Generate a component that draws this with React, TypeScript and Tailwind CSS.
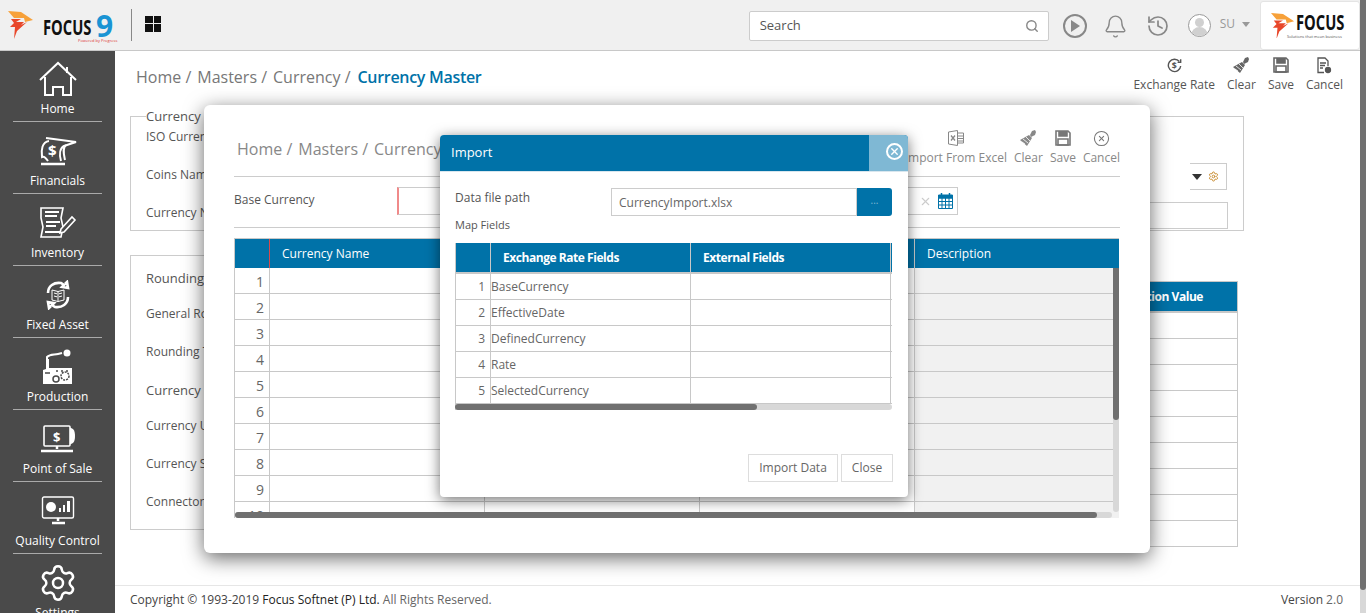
import React from 'react';
import { Search, Bell, History, X, Settings, CircleX } from 'lucide-react';

const font = { fontFamily: '"Open Sans", sans-serif' };

const navItems = ['Home', 'Financials', 'Inventory', 'Fixed Asset', 'Production', 'Point of Sale', 'Quality Control', 'Settings'];

const NavIcon = ({ name }: { name: string }) => {
  switch (name) {
    case 'Home':
      return (
        <svg width="38" height="36" viewBox="0 0 38 36" fill="none" stroke="white" strokeWidth="2">
          <path d="M1 19 19 2l18 17" />
          <path d="M28 6V12" />
          <path d="M6 16v18h8v-8h10v8h8V16" />
        </svg>
      );
    case 'Financials':
      return (
        <svg width="38" height="30" viewBox="0 0 38 30" fill="none" stroke="white" strokeWidth="2">
          <path d="M7 2l30 4-12 4c-4 2-5 8-3 15" />
          <path d="M10 5C3 6 2 14 3 21c2-1 4 1 6 4" />
          <path d="M27 9c-4 3-2 10-1 15" />
          <path d="M2 28h24" strokeWidth="2.5" />
          <text x="9" y="20" fill="white" stroke="none" fontSize="15" fontWeight="700" fontFamily="Open Sans">$</text>
        </svg>
      );
    case 'Inventory':
      return (
        <svg width="38" height="32" viewBox="0 0 38 32" fill="none" stroke="white" strokeWidth="1.6">
          <path d="M2 1h22l-2 10 2 9-2 10H2l2-10-2-9z" />
          <path d="M6 5h14M6 9h12M7 15h14M7 19h10M6 25h15" strokeWidth="2" />
          <path d="M22 22l11-12 3 3-11 12-4 1z" fill="#4a4a4a" />
        </svg>
      );
    case 'Fixed Asset':
      return (
        <svg width="26" height="30" viewBox="0 0 26 30" fill="none" stroke="white">
          <path d="M3 13C3 6 9 2 16 3l3 2-2 2 6 1-1-6-2 2" strokeWidth="2.6" />
          <path d="M23 17c0 7-6 11-13 10l-3-2 2-2-6-1 1 6 2-2" strokeWidth="2.6" />
          <path d="M7 10l6 1.500L19 10v10l-6 1.500L7 20zM13 11.500v10M9 13l3 .8M9 16l3 .8M14 13.800l3-.8M14 16.800l3-.8" strokeWidth="1" />
        </svg>
      );
    case 'Production':
      return (
        <svg width="32" height="36" viewBox="0 0 32 36" fill="none">
          <path d="M5 18V8c3-3 7-2 11-3l4-1" stroke="white" strokeWidth="2" />
          <circle cx="25" cy="4" r="3.500" fill="white" />
          <path d="M1 35V21l3-1V10h3v9h23v16z" fill="white" />
          <circle cx="14" cy="30" r="3" stroke="#4a4a4a" strokeWidth="1.500" />
          <circle cx="23" cy="27" r="4" stroke="#4a4a4a" strokeWidth="1.500" strokeDasharray="2 1" />
          <path d="M3 24h5M14 22h2M19 22h2M24 22h2" stroke="#4a4a4a" strokeWidth="1.500" />
        </svg>
      );
    case 'Point of Sale':
      return (
        <svg width="36" height="30" viewBox="0 0 36 30" fill="none" stroke="white">
          <rect x="4" y="2" width="26" height="20" strokeWidth="1.600" rx="1" />
          <path d="M30 4c3 0 5 2 5 8s-2 8-5 8z" fill="white" stroke="none" />
          <path d="M17 22v3M1 27h32" strokeWidth="2.500" />
          <text x="13" y="18" fill="white" stroke="none" fontSize="13" fontWeight="700" fontFamily="Open Sans">$</text>
        </svg>
      );
    case 'Quality Control':
      return (
        <svg width="34" height="30" viewBox="0 0 34 30" fill="none" stroke="white">
          <rect x="1.500" y="1" width="31" height="21" rx="1.500" strokeWidth="1.400" />
          <circle cx="10" cy="11" r="5" fill="white" stroke="none" />
          <path d="M18 16v-4h2v4zM22 16V9h2v7zM26 16V5h3v11z" fill="white" stroke="none" />
          <path d="M17 22v3M11 27h13" strokeWidth="2.500" />
        </svg>
      );
    default:
      return <Settings size={40} strokeWidth={1.5} className="text-white" />;
  }
};

const Flame = ({ w }: { w: number }) => (
  <svg width={w} viewBox="0 0 26 28" height={(w * 28) / 26}>
    <path d="M0 0l13 1 12 8-8 2-1-4H6z" fill="#f7a13a" />
    <path d="M3 8h10l-5 3 8 0-3 3 6-3-10 9-3 8 1-12-5 0 4-4z" fill="#e8472a" />
  </svg>
);

const BrushIcon = ({ color = '#666' }: { color?: string }) => (
  <svg width="18" height="18" viewBox="0 0 18 18">
    <path d="M11 6l2-4 3-1 1 2-1 3-4 2z" fill={color} />
    <path d="M10 6l3 3-5 8-7-6z" fill={color} />
    <path d="M4 10l5 4M7 8l4 4M3 13l3 2" stroke="white" strokeWidth="0.8" />
  </svg>
);

const SaveIcon = ({ color = '#666' }: { color?: string }) => (
  <svg width="18" height="18" viewBox="0 0 18 18" fill="none" stroke={color} strokeWidth="1.6">
    <path d="M2 2h12l2 2v12H2z" />
    <path d="M5 2v5h8V2" fill={color} />
    <path d="M4 10h10v6H4z" />
  </svg>
);

const DocCancelIcon = () => (
  <svg width="16" height="17" viewBox="0 0 16 17" fill="none" stroke="#555" strokeWidth="1.3">
    <path d="M8 15.500H2V1h7l3 3v5" />
    <path d="M4 6h6M4 8.500h5M4 11h3" />
    <circle cx="12" cy="13" r="2.500" fill="#555" />
  </svg>
);

const ExcelIcon = () => (
  <svg width="18" height="18" viewBox="0 0 18 18" fill="none" stroke="#888" strokeWidth="1">
    <path d="M1.500 3l9-1.500v15l-9-1.500z" />
    <path d="M10.500 4h6v10h-6M10.500 7h6M10.500 9.500h6M10.500 12h6" />
    <path d="M4 6.500l4 5M8 6.500l-4 5" strokeWidth="1.300" />
  </svg>
);

const CalendarIcon = () => (
  <svg width="15" height="16" viewBox="0 0 15 16" fill="none" stroke="#0072a8">
    <path d="M3.500 0v3M11.500 0v3" strokeWidth="1.500" />
    <path d="M.5 2h14v3H.5z" fill="#0072a8" />
    <path d="M.5 5h14v10.500H.5zM.5 8.500h14M.5 12h14M4 5v10.500M7.500 5v10.500M11 5v10.500" strokeWidth="1" />
  </svg>
);

const ExchangeIcon = () => (
  <svg width="15" height="15" viewBox="0 0 17 17" fill="none" stroke="#555" strokeWidth="1.600">
    <path d="M14 4a7 7 0 1 0 1.500 5" />
    <path d="M15.500 1.500V5h-3.500" />
    <text x="5.500" y="12.500" fill="#555" stroke="none" fontSize="10" fontWeight="700" fontFamily="Open Sans">$</text>
  </svg>
);

const ToolButton = ({ icon, label, className = 'text-[#555]' }: { icon: React.ReactNode; label: string; className?: string }) => (
  <div className={`flex flex-col items-center gap-[3px] text-[12px] leading-[16px] ${className}`}>
    <div className="h-[18px] flex items-center text-[#555]">{icon}</div>
    <span className="whitespace-nowrap">{label}</span>
  </div>
);

const GridRows = ({ rows }: { rows: number }) => (
  <div className="flex flex-col">
    {Array.from({ length: rows }).map((_, i) => (
      <div key={i} className="h-[26px] border-b border-[#c8c8c8]" />
    ))}
  </div>
);

const MainTableRow = ({ n }: { n: number }) => (
  <div className="flex h-[26px] shrink-0 border-b border-[#c8c8c8] text-[14px] text-[#666]">
    <div className="w-[35px] shrink-0 border-r border-[#c8c8c8] text-right pr-[5px] leading-[27px]">{n}</div>
    <div className="w-[215px] shrink-0 border-r border-[#c8c8c8]" />
    <div className="w-[215px] shrink-0 border-r border-[#c8c8c8]" />
    <div className="w-[215px] shrink-0 border-r border-[#c8c8c8]" />
    <div className="flex-1 bg-[#f1f1f1]" />
  </div>
);

const importFields = ['BaseCurrency', 'EffectiveDate', 'DefinedCurrency', 'Rate', 'SelectedCurrency'];

export default function App() {
  return (
    <div className="relative h-[613px] w-[1366px] overflow-hidden bg-white flex flex-col text-[#555]" style={font}>
      {/* Top bar */}
      <header className="h-[51px] shrink-0 bg-[#f0f0f0] border-b border-[#c8c8c8] flex items-center">
        <div className="ml-[8px]"><Flame w={26} /></div>
        <div className="ml-[9px] relative flex items-center w-[72px] h-[40px]">
          <span className="absolute left-0 top-[10px] origin-left scale-x-[0.7] text-[21px] font-bold text-[#111] leading-[24px]">FOCUS</span>
          <span className="absolute left-[53px] top-[9px] text-[30px] font-bold text-[#1a94d4] leading-[24px]">9</span>
          <span className="absolute left-[35px] top-[33px] text-[4px] leading-[5px] text-[#d33] whitespace-nowrap">Powered by Progress</span>
        </div>
        <div className="ml-[16px] h-[32px] w-px bg-[#888]" />
        <div className="ml-[13px] grid grid-cols-2 gap-[1px] w-[16px] h-[16px] mb-[3px]">
          <div className="bg-[#111]" /><div className="bg-[#111]" /><div className="bg-[#111]" /><div className="bg-[#111]" />
        </div>
        <div className="ml-auto mt-px w-[300px] h-[30px] bg-white border border-[#ccc] rounded-[2px] flex items-center justify-between pl-[10px] pr-[9px] text-[13px] text-[#555]">
          <span>Search</span>
          <Search size={14} className="text-[#888]" strokeWidth={2.4} />
        </div>
        <div className="ml-[14px] mt-[2px] w-[24px] h-[24px] rounded-full border-2 border-[#888] flex items-center justify-center">
          <div className="ml-[2px] w-0 h-0 border-y-[6px] border-y-transparent border-l-[9px] border-l-[#888]" />
        </div>
        <Bell size={25} strokeWidth={1.3} className="ml-[16px] mt-[2px] text-[#888]" />
        <History size={24} strokeWidth={1.7} className="ml-[18px] mt-[2px] text-[#888]" />
        <div className="ml-[18px] w-[23px] h-[23px] rounded-full border border-[#999] bg-white overflow-hidden flex flex-col items-center">
          <div className="mt-[3px] w-[9px] h-[11px] rounded-full bg-[#d0d0d0]" />
          <div className="w-[17px] h-[10px] rounded-t-full bg-[#d0d0d0]" />
        </div>
        <span className="ml-[9px] text-[12px] text-[#999] mb-[3px]">SU</span>
        <div className="ml-[7px] mb-[1px] w-0 h-0 border-x-[4px] border-x-transparent border-t-[5px] border-t-[#999]" />
        <div className="ml-[10px] w-[100px] h-[49px] bg-white rounded-[3px] border border-[#e4e4e4] flex items-center pl-[10px] mr-[6px] mt-[1px]">
          <Flame w={24} />
          <div className="relative w-[52px] h-[30px] ml-[1px]">
            <span className="absolute left-0 top-[1px] origin-left scale-x-[0.7] text-[21px] font-bold text-[#111] leading-[20px]">FOCUS</span>
            <span className="absolute left-[-9px] top-[23px] text-[4px] text-[#555] leading-[5px] whitespace-nowrap">Solutions that mean business</span>
          </div>
        </div>
      </header>

      <div className="flex flex-1 min-h-0">
        {/* Sidebar */}
        <aside className="w-[115px] shrink-0 bg-[#4a4a4a] overflow-hidden px-[13px]">
          <div className="-mt-px">
            {navItems.map((item) => (
              <div key={item} className="h-[72px] border-b border-[#aaa] flex flex-col items-center justify-end pb-[4px] text-white text-[12px] leading-[16px]">
                <div className="h-[42px] flex items-center justify-center mb-[1px]"><NavIcon name={item} /></div>
                <span className="whitespace-nowrap">{item}</span>
              </div>
            ))}
          </div>
        </aside>

        {/* Page */}
        <main className="flex-1 flex flex-col min-w-0 pr-[6px]">
          <div className="flex-1 min-h-0 overflow-hidden pl-[15px] pr-[16px]">
            <div className="h-[64px] flex items-start justify-between">
              <div className="mt-[14px] ml-[6px] text-[16px] leading-[24px] text-[#777] flex gap-[6px]">
                <span>Home /</span><span>Masters /</span><span>Currency /</span>
                <span className="text-[#0072a8] font-semibold tracking-[-0.3px] ml-px">Currency Master</span>
              </div>
              <div className="flex gap-[12px] mt-[5px] mr-px">
                <ToolButton icon={<ExchangeIcon />} label="Exchange Rate" />
                <ToolButton icon={<BrushIcon />} label="Clear" />
                <ToolButton icon={<SaveIcon />} label="Save" />
                <ToolButton icon={<DocCancelIcon />} label="Cancel" />
              </div>
            </div>

            <fieldset className="border border-[#ccc] h-[124px] w-[1114px] pl-[15px] -mt-[8px] text-[12px] leading-[16px]">
              <legend className="text-[13px] leading-[18px] pr-[3px] text-[#555] font-medium">Currency</legend>
              <div className="mt-[4px]">ISO Currency</div>
              <div className="mt-[22px]">Coins Name</div>
              <div className="mt-[22px]">Currency Name</div>
            </fieldset>
            <div className="mt-[24px] w-[1020px] h-[275px] border border-[#ccc] border-r-0 pl-[15px] text-[12px] leading-[16px]">
              <div className="text-[13px] font-medium mt-[13px] leading-[18px]">Rounding</div>
              <div className="mt-[19px]">General Rounding</div>
              <div className="mt-[22px]">Rounding Type</div>
              <div className="text-[13px] font-medium mt-[21px] leading-[18px]">Currency</div>
              <div className="mt-[19px]">Currency Unit</div>
              <div className="mt-[22px]">Currency Symbol</div>
              <div className="mt-[22px]">Connector</div>
            </div>
          </div>
          <footer className="h-[28px] shrink-0 border-t border-[#e6e6e6] flex items-center justify-between pl-[15px] pr-[17px] text-[12px] text-[#666]">
            <span><span className="text-[#444]">Copyright © 1993-2019</span> <span className="text-[#222] font-medium">Focus Softnet (P) Ltd.</span> All Rights Reserved.</span>
            <span><span className="font-medium text-[#444]">Version</span> 2.0</span>
          </footer>
        </main>
      </div>

      {/* Page scrollbar */}
      <div className="absolute right-0 top-0 bottom-0 w-[6px] bg-[#d8d8d8]">
        <div className="h-[590px] bg-[#707070] rounded-b-[3px]" />
      </div>

      {/* Rounding table behind the dialogs */}
      <div className="absolute left-[1000px] top-[281px] w-[238px] border-x border-[#c8c8c8]">
        <div className="h-[32px] bg-[#0072a8] border-t border-b-[2px] border-[#c8c8c8] text-white text-[12px] font-bold tracking-[-0.45px] leading-[29px] pl-[111px] whitespace-nowrap">Validation Value</div>
        <GridRows rows={9} />
      </div>
      <div className="absolute left-[1190px] top-[163px] w-[37px] h-[27px] border border-l-0 border-[#ccc] flex items-center gap-[6px]">
        <div className="ml-[2px] w-0 h-0 border-x-[5px] border-x-transparent border-t-[6px] border-t-[#333]" />
        <Settings size={11} className="text-[#c78a2c]" />
      </div>
      <div className="absolute left-[1150px] top-[202px] w-[78px] h-[27px] border border-l-0 border-[#ccc]" />

      {/* Currency dialog */}
      <div className="absolute left-[204px] top-[105px] w-[946px] h-[448px] bg-white rounded-[6px] shadow-[0_5px_20px_rgba(0,0,0,0.6)] pl-[30px] pr-[30px]">
        <div className="h-[72px] flex items-start justify-between border-b border-[#ccc]">
          <div className="mt-[32px] ml-[3px] text-[16px] leading-[24px] text-[#888] flex gap-[6px] whitespace-nowrap">
            <span>Home /</span><span>Masters /</span><span>Currency</span>
          </div>
          <div className="flex gap-[7px] mt-[24px] text-[#888]">
            <ToolButton className="text-[#888]" icon={<ExcelIcon />} label="Import From Excel" />
            <ToolButton className="text-[#888]" icon={<BrushIcon color="#888" />} label="Clear" />
            <ToolButton className="text-[#888]" icon={<SaveIcon color="#777" />} label="Save" />
            <ToolButton className="text-[#888]" icon={<CircleX size={17} strokeWidth={1.5} className="text-[#777]" />} label="Cancel" />
          </div>
        </div>
        <div className="h-[51px] border-b border-[#ccc] flex items-center relative">
          <span className="text-[12px] text-[#555] mb-[5px]">Base Currency</span>
          <div className="absolute left-[163px] top-[10px] w-[561px] h-[28px] border border-[#ccc] border-l-[2px] border-l-[#f08a8a] flex items-center justify-end pr-[4px] gap-[6px]">
            <X size={13} className="text-[#ccc]" />
            <CalendarIcon />
          </div>
        </div>
        <div className="mt-[10px] mr-px border border-[#c8c8c8] border-r-0 border-b-0 relative h-[280px] overflow-hidden">
          <div className="h-[29px] bg-[#0072a8] flex text-white text-[12px] font-medium leading-[29px]">
            <div className="w-[35px] border-r border-[#d84a4a]" />
            <div className="w-[215px] pl-[12px] border-r border-[#0072a8]">Currency Name</div>
            <div className="w-[215px] border-r border-[#0072a8]" />
            <div className="w-[215px] border-r border-[#c8c8c8]" />
            <div className="flex-1 pl-[12px]">Description</div>
          </div>
          {Array.from({ length: 10 }).map((_, i) => <MainTableRow key={i} n={i + 1} />)}
          <div className="absolute left-0 right-[7px] bottom-0 h-[6px] bg-[#d8d8d8] rounded-[3px]">
            <div className="h-full w-[862px] bg-[#707070] rounded-[3px]" />
          </div>
          <div className="absolute right-0 top-[29px] bottom-[6px] w-[6px] bg-[#d8d8d8] rounded-[3px]">
            <div className="h-[152px] bg-[#707070] rounded-b-[3px]" />
          </div>
        </div>
      </div>

      {/* Import dialog */}
      <div className="absolute left-[440px] top-[135px] w-[468px] h-[362px] bg-white rounded-[4px] shadow-[0_3px_14px_rgba(0,0,0,0.55)] overflow-hidden">
        <div className="h-[37px] bg-[#0072a8] flex items-center justify-between text-white border-b border-[#d8e6ee]">
          <span className="ml-[11px] text-[13px]">Import</span>
          <div className="w-[39px] h-full bg-[#7fb8d4] flex items-start justify-center pt-[8px] pl-[11px]">
            <div className="w-[17px] h-[17px] rounded-full border-2 border-white flex items-center justify-center"><X size={11} strokeWidth={3} /></div>
          </div>
        </div>
        <div className="px-[15px]">
          <div className="flex justify-between mt-[16px] h-[28px]">
            <span className="text-[12px] leading-[20px] text-[#555] font-medium">Data file path</span>
            <div className="flex w-[281px] mr-[1px]">
              <div className="flex-1 border border-[#ccc] text-[12px] text-[#666] pl-[7px] leading-[27px]">CurrencyImport.xlsx</div>
              <div className="w-[35px] bg-[#0072a8] rounded-r-[3px] text-center text-[#7fb8d4] text-[10px] leading-[24px]">...</div>
            </div>
          </div>
          <div className="text-[11px] leading-[16px] mt-[1px] text-[#555] font-medium">Map Fields</div>
          <div className="mt-[10px] w-[437px] border-l border-[#c8c8c8]">
            <div className="h-[31px] bg-[#0072a8] flex text-white text-[12px] font-bold tracking-[-0.45px] leading-[30px] border-b-[2px] border-[#c8c8c8]">
              <div className="w-[35px] border-r border-[#c8c8c8]" />
              <div className="w-[200px] pl-[12px] border-r border-[#c8c8c8]">Exchange Rate Fields</div>
              <div className="w-[200px] pl-[12px] border-r border-[#c8c8c8]">External Fields</div>
            </div>
            {importFields.map((field, i) => (
              <div key={field} className="h-[26px] flex border-b border-[#c8c8c8] text-[12px] text-[#666] leading-[26px]">
                <div className="w-[35px] border-r border-[#c8c8c8] text-right pr-[5px]">{i + 1}</div>
                <div className="w-[200px] border-r border-[#c8c8c8]">{field}</div>
                <div className="w-[200px] border-r border-[#c8c8c8]" />
              </div>
            ))}
            <div className="h-[6px] bg-[#d8d8d8] rounded-[3px] -ml-px">
              <div className="h-full w-[302px] bg-[#707070] rounded-[3px]" />
            </div>
          </div>
          <div className="flex justify-end gap-[3px] mt-[44px] w-[438px]">
            <div className="h-[28px] w-[90px] border border-[#ddd] text-[12px] text-[#666] leading-[26px] text-center">Import Data</div>
            <div className="h-[28px] w-[52px] border border-[#ddd] text-[12px] text-[#666] leading-[26px] text-center">Close</div>
          </div>
        </div>
      </div>
    </div>
  );
}
